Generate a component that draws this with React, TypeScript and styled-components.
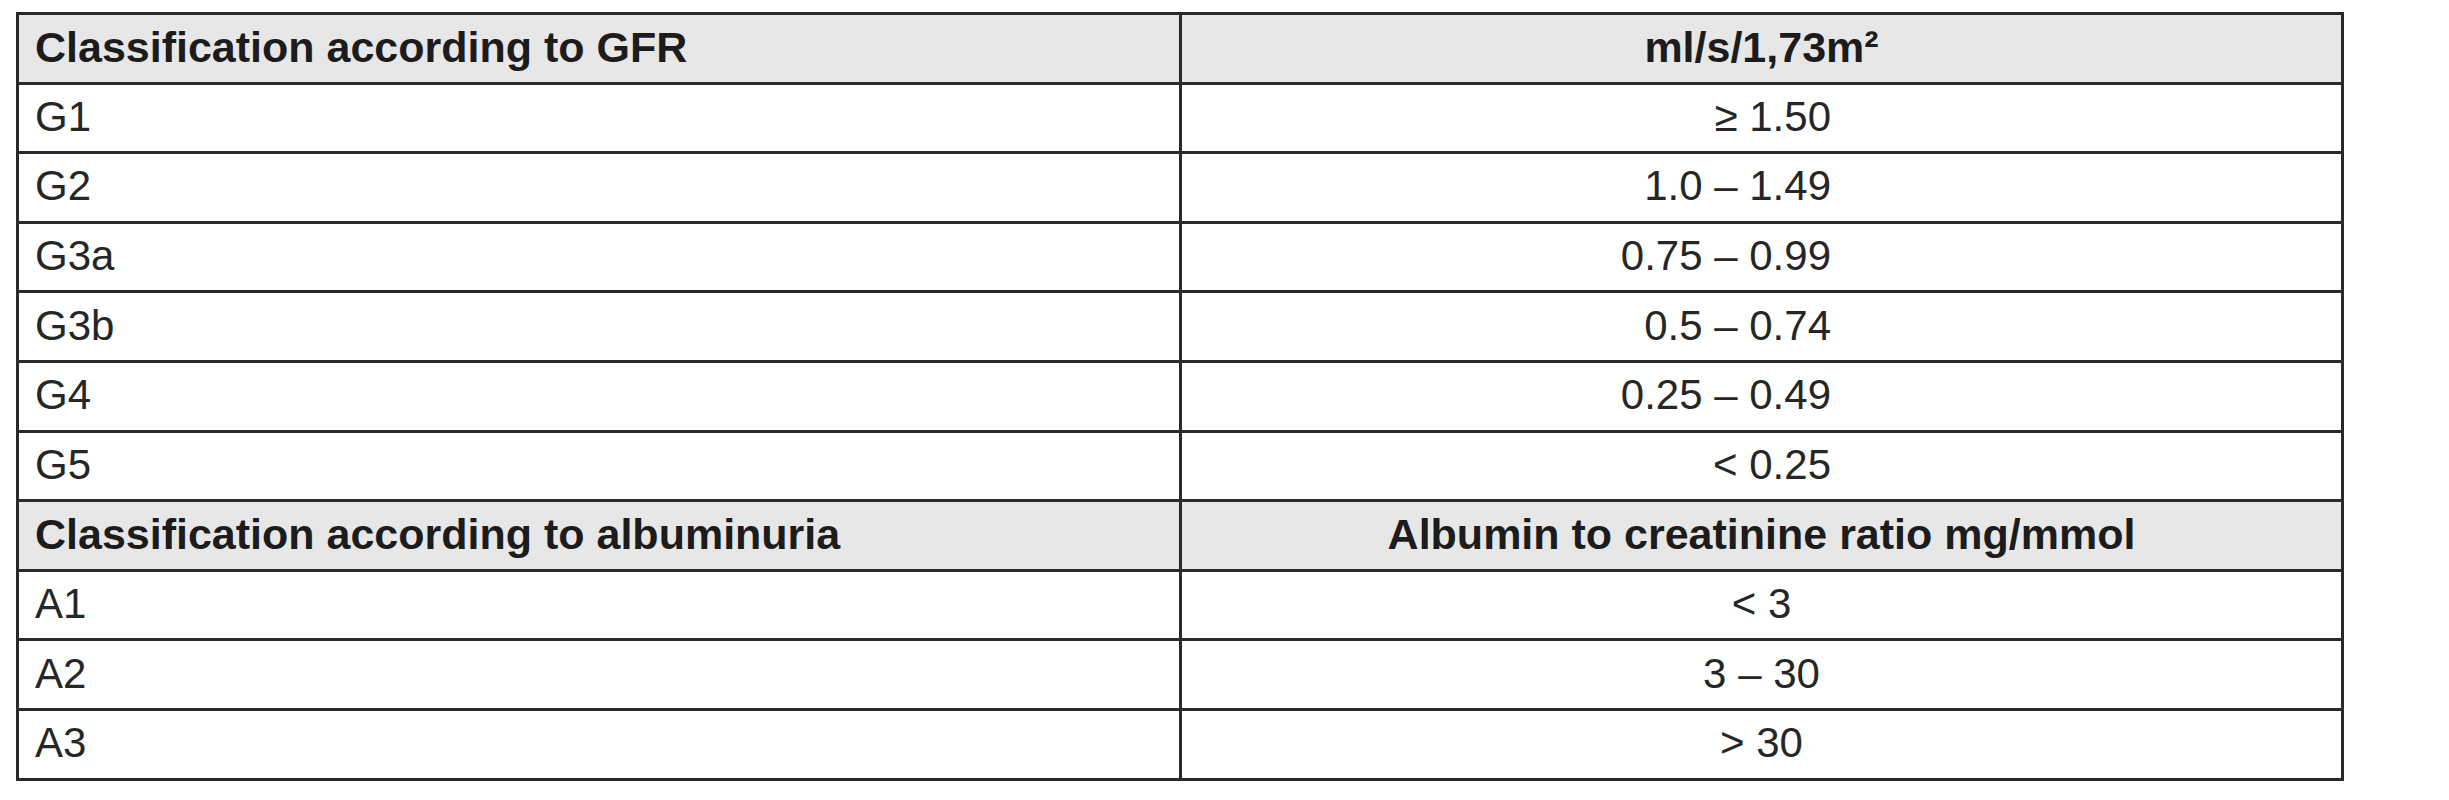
import React from 'react'
import styled, { createGlobalStyle } from 'styled-components'

const GlobalStyle = createGlobalStyle`
  html, body {
    margin: 0;
    padding: 0;
    background: #fff;
  }
  body {
    font-family: "Liberation Sans", Arial, Helvetica, sans-serif;
    color: #222;
  }
`

const Page = styled.div`
  padding: 12px 0 0 16px;
`

const Table = styled.div`
  width: 2328px;
  box-sizing: border-box;
  border: 3px solid #2a2a2a;
`

interface RowProps {
  $head?: boolean
}

const Row = styled.div<RowProps>`
  display: grid;
  grid-template-columns: 1160px 1fr;
  height: 69.6px;
  box-sizing: border-box;
  border-top: 3px solid #2a2a2a;
  background: ${({ $head }) => ($head ? '#e7e7e7' : '#fff')};
  font-weight: ${({ $head }) => ($head ? 'bold' : 'normal')};
  font-size: ${({ $head }) => ($head ? '43px' : '42px')};
  color: ${({ $head }) => ($head ? '#1c1c1c' : '#262626')};

  &:first-child {
    border-top: none;
    height: 66.6px;
  }
`

type Align = 'left' | 'center' | 'right'

interface CellProps {
  $align?: Align
}

const Cell = styled.div<CellProps>`
  display: flex;
  align-items: center;
  box-sizing: border-box;
  white-space: nowrap;
  justify-content: ${({ $align = 'left' }) =>
    $align === 'left' ? 'flex-start' : $align === 'right' ? 'flex-end' : 'center'};
  padding: ${({ $align = 'left' }) =>
    $align === 'left' ? '0 0 2px 16px' : $align === 'right' ? '0 510px 2px 0' : '0 0 2px 0'};

  & + & {
    border-left: 3px solid #2a2a2a;
  }
`

type Line = {
  label: string
  value: string
  head?: boolean
  align?: Align
}

const lines: Line[] = [
  { label: 'Classification according to GFR', value: 'ml/s/1,73m²', head: true, align: 'center' },
  { label: 'G1', value: '≥ 1.50', align: 'right' },
  { label: 'G2', value: '1.0 – 1.49', align: 'right' },
  { label: 'G3a', value: '0.75 – 0.99', align: 'right' },
  { label: 'G3b', value: '0.5 – 0.74', align: 'right' },
  { label: 'G4', value: '0.25 – 0.49', align: 'right' },
  { label: 'G5', value: '< 0.25', align: 'right' },
  { label: 'Classification according to albuminuria', value: 'Albumin to creatinine ratio mg/mmol', head: true, align: 'center' },
  { label: 'A1', value: '< 3', align: 'center' },
  { label: 'A2', value: '3 – 30', align: 'center' },
  { label: 'A3', value: '> 30', align: 'center' },
]

export default function App() {
  return (
    <>
      <GlobalStyle />
      <Page>
        <Table>
          {lines.map((l) => (
            <Row key={l.label} $head={l.head}>
              <Cell>{l.label}</Cell>
              <Cell $align={l.align}>{l.value}</Cell>
            </Row>
          ))}
        </Table>
      </Page>
    </>
  )
}
